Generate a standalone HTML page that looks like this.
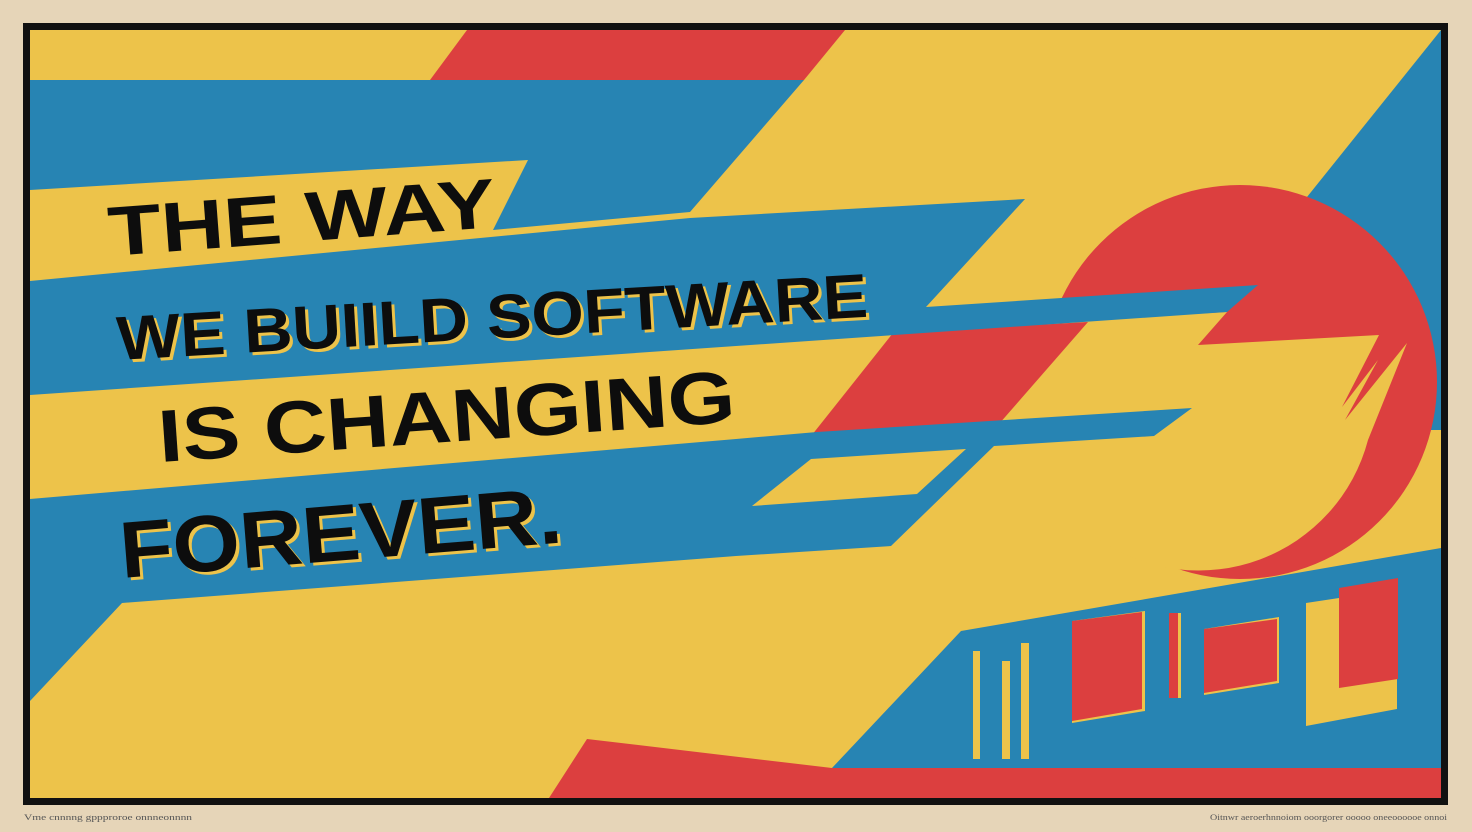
<!DOCTYPE html>
<html><head><meta charset="utf-8"><style>
html,body{margin:0;padding:0;background:#E6D5B8;}
svg{display:block;}
</style></head><body>
<svg width="1472" height="832" viewBox="0 0 1472 832" xmlns="http://www.w3.org/2000/svg">
<rect width="1472" height="832" fill="#E6D5B8"/>
<rect x="23" y="23" width="1425" height="782" fill="#111"/>
<rect x="30" y="30" width="1411" height="768" fill="#EDC34A"/>
<g>
<polygon points="467,30 845,30 804,80 430,80" fill="#DC3F3F"/>
<polygon points="1441,30 1441,430 1120,430" fill="#2784B3"/>
<polygon points="30,80 804,80 690,212 493,230 528,160 30,190" fill="#2784B3"/>
<circle cx="1240" cy="382" r="197" fill="#DC3F3F"/>
<path d="M1000,325 L1227,312 L1198,345 L1379,335 L1342,407 L1378,360 L1345,420 L1407,343 L1368,440 A175,175 0 0 1 1100,540 L1000,540 Z" fill="#EDC34A"/>
<polygon points="893,333 1088,322 985,440 800,450" fill="#DC3F3F"/>
<polygon points="30,281 690,218 1025,199 926,307 1258,285 1227,312 30,395" fill="#2784B3"/>
<polygon points="30,499 736,439 817,432 1192,408 1154,436 994,446 891,546 736,556 122,603 30,701" fill="#2784B3"/>
<polygon points="811,459 966,449 917,494 752,506" fill="#EDC34A"/>
<polygon points="587,739 832,768 1441,768 1441,798 549,798" fill="#DC3F3F"/>
<polygon points="961,631 1441,548 1441,768 832,768" fill="#2784B3"/>
<rect x="973" y="651" width="7" height="108" fill="#EDC34A"/>
<rect x="1002" y="661" width="8" height="98" fill="#EDC34A"/>
<rect x="1021" y="643" width="8" height="116" fill="#EDC34A"/>
<polygon points="1072,621 1145,611 1145,711 1072,723" fill="#EDC34A"/>
<polygon points="1072,621 1142,612 1142,709 1072,721" fill="#DC3F3F"/>
<rect x="1169" y="613" width="12" height="85" fill="#EDC34A"/>
<rect x="1169" y="613" width="9" height="85" fill="#DC3F3F"/>
<polygon points="1204,629 1279,617 1279,683 1204,695" fill="#EDC34A"/>
<polygon points="1204,629 1277,619 1277,681 1204,693" fill="#DC3F3F"/>
<polygon points="1306,603 1339,598 1397,588 1397,709 1306,726" fill="#EDC34A"/>
<polygon points="1339,588 1398,578 1398,679 1339,688" fill="#DC3F3F"/>
</g>
<g font-family="Liberation Sans, sans-serif" font-weight="bold" fill="#0d0d0d">
<text x="110" y="256" font-size="70" textLength="388" lengthAdjust="spacingAndGlyphs" transform="rotate(-4.3 110 256)">THE WAY</text>
<g transform="rotate(-3.3 118 360)">
<text x="121" y="363" font-size="62" textLength="752" lengthAdjust="spacingAndGlyphs" fill="#EDC34A">WE BUIILD SOFTWARE</text>
<text x="118" y="360" font-size="62" textLength="752" lengthAdjust="spacingAndGlyphs">WE BUIILD SOFTWARE</text>
</g>
<text x="160" y="462" font-size="74" textLength="578" lengthAdjust="spacingAndGlyphs" transform="rotate(-4 160 462)">IS CHANGING</text>
<g transform="rotate(-4.6 122 578)">
<text x="125" y="581" font-size="80" textLength="443" lengthAdjust="spacingAndGlyphs" fill="#EDC34A">FOREVER.</text>
<text x="122" y="578" font-size="80" textLength="443" lengthAdjust="spacingAndGlyphs">FOREVER.</text>
</g>
</g>
<g font-family="Liberation Serif, serif" font-size="8" fill="#555">
<text x="24" y="820" textLength="168" lengthAdjust="spacingAndGlyphs">Vme cnnnng gppproroe onnneonnnn</text>
<text x="1210" y="820" textLength="237" lengthAdjust="spacingAndGlyphs">Oitnwr aeroerhnnoiom ooorgorer ooooo oneeoooooe onnoi</text>
</g>
</svg>
</body></html>
